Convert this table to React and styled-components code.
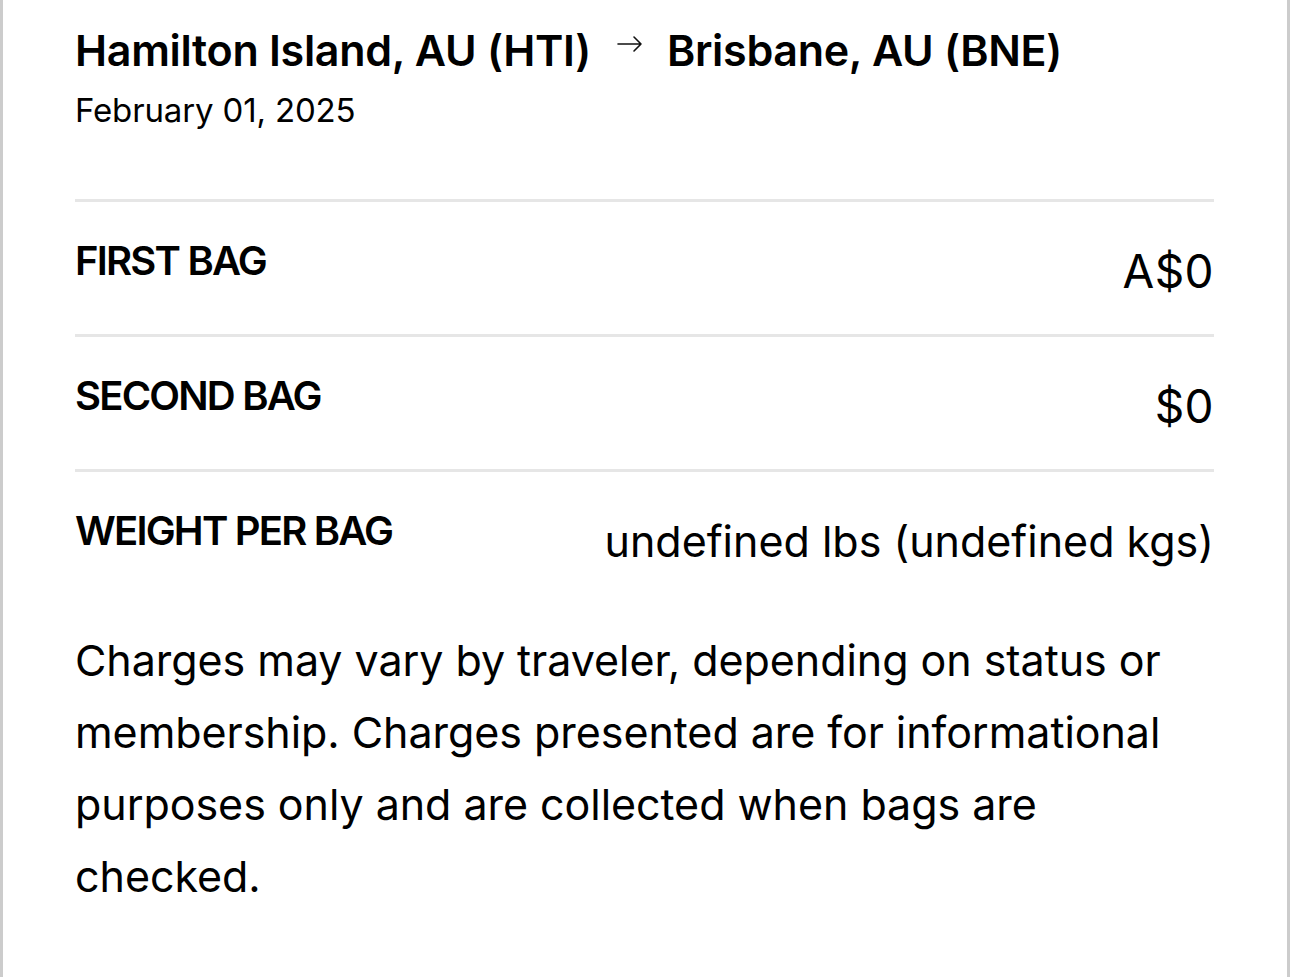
import React from 'react'
import styled, { createGlobalStyle } from 'styled-components'

const GlobalStyle = createGlobalStyle`
	html, body {
		margin: 0;
		padding: 0;
		background: #ffffff;
	}
	body {
		font-family: Inter, 'Noto Sans', 'Liberation Sans', sans-serif;
		color: #000000;
		-webkit-font-smoothing: antialiased;
	}
`

const Page = styled.div`
	box-sizing: border-box;
	width: 1290px;
	min-height: 977px;
	border-left: 3px solid #cccccc;
	border-right: 3px solid #cccccc;
	padding: 22px 73px 40px 72px;
`

const Header = styled.header`
	display: flex;
	flex-direction: column;
	padding-bottom: 69px;
`

const Route = styled.h1`
	display: flex;
	align-items: center;
	margin: 0;
	font-size: 43px;
	font-weight: 600;
	line-height: 56px;
	letter-spacing: -0.3px;
`

const Arrow = styled.svg`
	margin: 0 24px 12px 25px;
	flex-shrink: 0;
`

const Date = styled.div`
	font-size: 33px;
	font-weight: 400;
	line-height: 40px;
	letter-spacing: -0.15px;
	margin-top: 12px;
`

const List = styled.div`
	display: flex;
	flex-direction: column;
`

const Row = styled.div`
	box-sizing: border-box;
	display: flex;
	justify-content: space-between;
	align-items: flex-start;
	height: 135px;
	padding-top: 35px;
	border-top: 3px solid #e6e6e6;
`

const Label = styled.div`
	font-size: 40px;
	font-weight: 600;
	line-height: 48px;
	letter-spacing: -1.8px;
	text-transform: uppercase;
`

const Value = styled.div`
	margin-top: 6px;
	font-size: ${({ $big }) => ($big ? '46px' : '43px')};
	font-weight: 400;
	line-height: 56px;
	letter-spacing: ${({ $big }) => ($big ? '0.4px' : '0')};
	text-align: right;
`

const Note = styled.p`
	margin: 20px 0 0;
	max-width: 1110px;
	font-size: 43px;
	font-weight: 400;
	line-height: 72px;
	letter-spacing: -0.05px;
`

const ArrowIcon = () => (
	<Arrow width="27" height="18" viewBox="0 0 27 18" fill="none">
		<path
			d="M2 9H25M18 2L25 9L18 16"
			stroke="#111"
			strokeWidth="1.6"
			strokeLinecap="round"
			strokeLinejoin="round"
		/>
	</Arrow>
)

const fees = [
	{ label: 'First bag', value: 'A$0', big: true },
	{ label: 'Second bag', value: '$0', big: true },
	{ label: 'Weight per bag', value: 'undefined lbs (undefined kgs)' },
]

const App = () => {
	return (
		<>
			<GlobalStyle />
			<Page>
				<Header>
					<Route>
						<span>Hamilton Island, AU (HTI)</span>
						<ArrowIcon />
						<span>Brisbane, AU (BNE)</span>
					</Route>
					<Date>February 01, 2025</Date>
				</Header>
				<List>
					{fees.map((f) => (
						<Row key={f.label}>
							<Label>{f.label}</Label>
							<Value $big={f.big}>{f.value}</Value>
						</Row>
					))}
				</List>
				<Note>
					Charges may vary by traveler, depending on status or membership.
					Charges presented are for informational purposes only and are
					collected when bags are checked.
				</Note>
			</Page>
		</>
	)
}

export default App
